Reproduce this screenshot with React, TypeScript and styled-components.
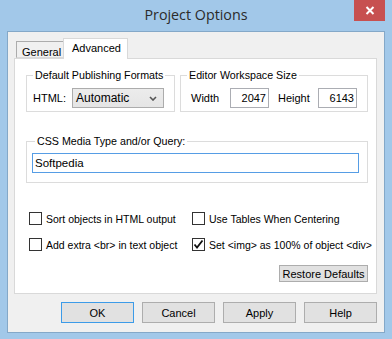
import React from "react";
import styled, { createGlobalStyle } from "styled-components";

const Global = createGlobalStyle`
  html, body { margin: 0; padding: 0; background: #a2c8e9; }
  body { font-family: "Liberation Sans", Arial, sans-serif; font-size: 10.5px; color: #000; }
  * { box-sizing: border-box; }
`;

const Window = styled.div`
  position: relative;
  width: 392px;
  height: 339px;
  background: #a2c8e9;
  display: flex;
  flex-direction: column;
  overflow: hidden;
`;

const TitleBar = styled.div`
  height: 31px;
  display: grid;
  grid-template-columns: 1fr auto 1fr;
  align-items: start;
`;

const Title = styled.div`
  grid-column: 2;
  font-family: "Open Sans", "Noto Sans", sans-serif;
  font-size: 14.3px;
  line-height: 30px;
  color: #2b2b2b;
`;

const CloseButton = styled.div`
  grid-column: 3;
  justify-self: end;
  width: 31px;
  height: 21px;
  margin-right: 7px;
  background: #c75050;
  display: flex;
  align-items: center;
  justify-content: center;
`;

const Client = styled.div`
  flex: 1;
  margin: 0 7px 6px 7px;
  border: 1px solid #84a8c8;
  background: #f0f0f0;
  padding: 6px 7px 9px 6px;
  display: flex;
  flex-direction: column;
`;

const TabStrip = styled.div`
  height: 20px;
  display: flex;
  align-items: flex-end;
  padding-left: 2px;
`;

const Tab = styled.div<{ $active?: boolean }>`
  position: relative;
  z-index: ${(p) => (p.$active ? 2 : 1)};
  height: ${(p) => (p.$active ? 21 : 17)}px;
  margin-bottom: ${(p) => (p.$active ? -1 : 0)}px;
  padding: ${(p) => (p.$active ? "2px 0 0 8px" : "3px 0 0 5px")};
  width: ${(p) => (p.$active ? 65 : 48)}px;
  margin-left: ${(p) => (p.$active ? -1 : 0)}px;
  background: ${(p) => (p.$active ? "#fff" : "#f0f0f0")};
  border: 1px solid ${(p) => (p.$active ? "#d9d9d9" : "#acacac")};
  border-bottom: ${(p) => (p.$active ? "none" : "1px solid #d9d9d9")};
  font-size: 11px;
  line-height: 14px;
  white-space: nowrap;
`;

const Panel = styled.div`
  position: relative;
  flex: 1;
  background: #fff;
  border: 1px solid #d9d9d9;
  padding: 9px 8px 0 11px;
  display: flex;
  flex-direction: column;
`;

const TopRow = styled.div`
  display: flex;
  gap: 5px;
`;

const Group = styled.fieldset<{ $w?: number }>`
  margin: 0;
  min-width: 0;
  border: 1px solid #dcdcdc;
  ${(p) => (p.$w ? `width: ${p.$w}px;` : "flex: 1;")}
  padding: 6px 6px 3px 6px;
`;

const Legend = styled.legend<{ $shift?: number }>`
  padding: 0 2px;
  margin-left: ${(p) => p.$shift ?? 0}px;
  line-height: 14px;
  font-size: 10.7px;
  white-space: nowrap;
`;

const Row = styled.div<{ $indent?: number }>`
  display: flex;
  align-items: center;
  height: 20px;
  padding-left: ${(p) => p.$indent ?? 0}px;
  font-size: 11px;
`;

const FieldLabel = styled.span<{ $w: number }>`
  width: ${(p) => p.$w}px;
  flex: none;
`;

const Select = styled.div`
  width: 92px;
  height: 20px;
  border: 1px solid #acacac;
  background: linear-gradient(#ececec, #e5e5e5);
  display: flex;
  align-items: center;
  justify-content: space-between;
  padding: 0 6px 0 3px;
  font-size: 12px;
`;

const NumInput = styled.div<{ $gap?: number }>`
  width: 39px;
  height: 20px;
  border: 1px solid #abadb3;
  background: #fff;
  text-align: right;
  padding-right: 2px;
  line-height: 18px;
  margin-right: ${(p) => p.$gap ?? 0}px;
  flex: none;
`;

const CssGroup = styled.fieldset`
  margin: 22px 0 0 0;
  min-width: 0;
  border: 1px solid #dcdcdc;
  padding: 5px 8px 9px 5px;
`;

const TextInput = styled.div`
  height: 20px;
  border: 1px solid #569de5;
  background: #fff;
  line-height: 18px;
  padding-left: 2px;
  font-size: 11.5px;
`;

const CheckGrid = styled.div`
  display: grid;
  grid-template-columns: 163px 1fr;
  row-gap: 13px;
  margin: 29px 0 0 3px;
`;

const CheckItem = styled.label`
  display: flex;
  align-items: center;
  gap: 4px;
  height: 13px;
  white-space: nowrap;
`;

const Box = styled.span`
  width: 13px;
  height: 13px;
  border: 1px solid #333;
  background: #fff;
  display: flex;
  align-items: center;
  justify-content: center;
  flex: none;
`;

const Button = styled.div<{ $w?: number; $h?: number; $focused?: boolean }>`
  width: ${(p) => p.$w ?? 73}px;
  height: ${(p) => p.$h ?? 21}px;
  border: 1px solid ${(p) => (p.$focused ? "#3c9be8" : "#adadad")};
  background: #e1e1e1;
  display: flex;
  align-items: center;
  justify-content: center;
  font-size: 11px;
  flex: none;
`;

const RestoreRow = styled.div`
  display: flex;
  justify-content: flex-end;
  margin-top: 14px;
`;

const ButtonBar = styled.div`
  display: flex;
  justify-content: flex-end;
  gap: 8px;
  margin-top: 8px;
`;

const Chevron = () => (
  <svg width="8" height="5" viewBox="0 0 8 5">
    <polyline points="1,1 4,4 7,1" fill="none" stroke="#555" strokeWidth="1.6" />
  </svg>
);

const Check = () => (
  <svg width="11" height="11" viewBox="0 0 11 11">
    <polyline points="1.5,5.5 4,8.5 9.5,1.5" fill="none" stroke="#111" strokeWidth="1.8" />
  </svg>
);

const CheckBox = ({ label, checked }: { label: string; checked?: boolean }) => (
  <CheckItem>
    <Box>{checked && <Check />}</Box>
    <span>{label}</span>
  </CheckItem>
);

export default function App() {
  return (
    <>
      <Global />
      <Window>
        <TitleBar>
          <Title>Project Options</Title>
          <CloseButton>
            <svg width="10" height="9" viewBox="0 0 10 9">
              <path d="M1.5 1 L8.5 8 M8.5 1 L1.5 8" stroke="#fff" strokeWidth="2" />
            </svg>
          </CloseButton>
        </TitleBar>
        <Client>
          <TabStrip>
            <Tab>General</Tab>
            <Tab $active>Advanced</Tab>
          </TabStrip>
          <Panel>
            <TopRow>
              <Group $w={149}>
                <Legend>Default Publishing Formats</Legend>
                <Row>
                  <FieldLabel $w={39}>HTML:</FieldLabel>
                  <Select>
                    <span>Automatic</span>
                    <Chevron />
                  </Select>
                </Row>
              </Group>
              <Group>
                <Legend>Editor Workspace Size</Legend>
                <Row $indent={4}>
                  <FieldLabel $w={39}>Width</FieldLabel>
                  <NumInput $gap={9}>2047</NumInput>
                  <FieldLabel $w={40}>Height</FieldLabel>
                  <NumInput>6143</NumInput>
                </Row>
              </Group>
            </TopRow>
            <CssGroup>
              <Legend $shift={3}>CSS Media Type and/or Query:</Legend>
              <TextInput>Softpedia</TextInput>
            </CssGroup>
            <CheckGrid>
              <CheckBox label="Sort objects in HTML output" />
              <CheckBox label="Use Tables When Centering" />
              <CheckBox label="Add extra <br> in text object" />
              <CheckBox label="Set <img> as 100% of object <div>" checked />
            </CheckGrid>
            <RestoreRow>
              <Button $w={89} $h={17}>Restore Defaults</Button>
            </RestoreRow>
          </Panel>
          <ButtonBar>
            <Button $focused>OK</Button>
            <Button>Cancel</Button>
            <Button>Apply</Button>
            <Button>Help</Button>
          </ButtonBar>
        </Client>
      </Window>
    </>
  );
}
